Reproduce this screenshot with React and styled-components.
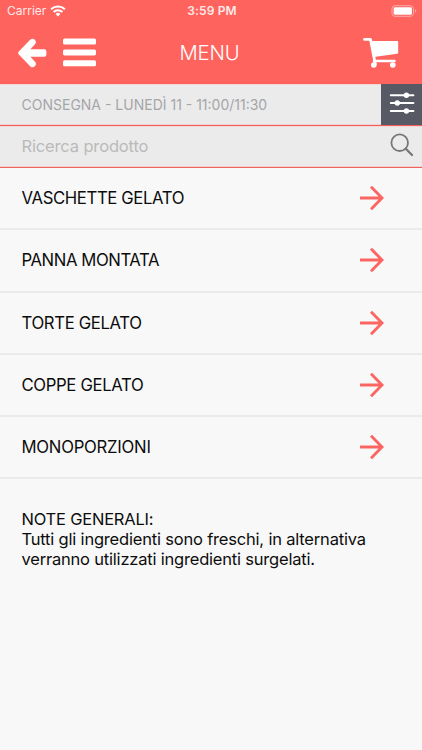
import React from "react";
import styled, { createGlobalStyle } from "styled-components";

const GlobalStyle = createGlobalStyle`
  * {
    box-sizing: border-box;
  }
  body {
    margin: 0;
    background: #f8f8f8;
    font-family: Inter, "Liberation Sans", sans-serif;
  }
  svg {
    display: block;
    flex-shrink: 0;
  }
`;

const Screen = styled.div`
  width: 422px;
  height: 750px;
  overflow: hidden;
  background: #f8f8f8;
  color: #0c0c0c;
`;

const Text = styled.span`
  white-space: nowrap;
  letter-spacing: ${({ $spacing }) => $spacing || 0}px;
`;

const Header = styled.header`
  height: 84px;
  background: #ff635e;
  color: #fff;
`;

const StatusBar = styled.div`
  display: grid;
  grid-template-columns: 1fr auto 1fr;
  align-items: center;
  height: 21px;
  padding: 0 5px 0 7px;
  font-size: 12px;
  color: #ffe9e8;
`;

const Carrier = styled.div`
  display: flex;
  align-items: center;
  gap: 4px;
`;

const Clock = styled(Text)`
  font-weight: 600;
`;

const Battery = styled.div`
  justify-self: end;
`;

const NavBar = styled.nav`
  display: grid;
  grid-template-columns: 1fr auto 1fr;
  align-items: center;
  height: 63px;
  padding: 0 22px 0 18px;
`;

const NavLeft = styled.div`
  display: flex;
  align-items: center;
  gap: 16px;
`;

const Title = styled.h1`
  margin: 0;
  padding-left: 1px;
  font-size: 20.3px;
  font-weight: 300;
`;

const Cart = styled.div`
  justify-self: end;
`;

const Bar = styled.div`
  display: flex;
  align-items: center;
  justify-content: space-between;
  height: 42px;
  padding-left: 21.5px;
  background: #ebebeb;
  border-bottom: 1px solid #f0605c;
  box-shadow: inset 0 -1px #f3cfce, inset 0 1px #f3d6d5;
  color: ${({ $color }) => $color};
  font-size: ${({ $size }) => $size}px;
`;

const FilterButton = styled.div`
  display: flex;
  align-items: center;
  justify-content: center;
  width: 41px;
  height: 100%;
  padding-bottom: 3px;
  background: #575964;
`;

const Placeholder = styled(Text)`
  padding-bottom: 2px;
`;

const SearchButton = styled.div`
  padding: 0 8px 3px 0;
`;

const List = styled.ul`
  margin: 0;
  padding: 0;
  list-style: none;
`;

const Item = styled.li`
  display: flex;
  align-items: center;
  justify-content: space-between;
  height: 62.25px;
  padding: 0 38px 0 21.5px;
  border-bottom: 2px solid #ebebeb;
  font-size: 16.7px;
`;

const Notes = styled.div`
  padding: 30px 21.5px;
  font-size: 16.5px;
  line-height: 20px;
`;

const NoteLine = styled(Text)`
  display: block;
`;

const WifiIcon = () => (
  <svg width="16" height="12" viewBox="0 0 16 12" fill="none" stroke="#fff" strokeWidth="2">
    <path d="M1.1 4.3a10 10 0 0 1 13.8 0M3.6 7a6.3 6.3 0 0 1 8.8 0" />
    <path d="M8 11.4 5.6 9a3.4 3.4 0 0 1 4.8 0Z" fill="#fff" stroke="none" />
  </svg>
);

const BatteryIcon = () => (
  <svg width="26" height="12" viewBox="0 0 26 12">
    <rect x="1" y="0.7" width="21.5" height="10.6" rx="3" fill="none" stroke="#ffaba8" />
    <rect x="2.7" y="2.3" width="18.2" height="7.4" rx="1.4" fill="#fff" />
    <path d="M24 4.3v3.4q1.3-.5 1.3-1.7T24 4.3Z" fill="#ffaba8" />
  </svg>
);

const BackIcon = () => (
  <svg width="29" height="30" viewBox="0 0 29 30" fill="#fff">
    <path d="M.8 13.5 12.4 1.5q2.2-1.8 4.4.2 2.2 2.3.2 4.6L12.4 11.3H26.2q2.2 0 2.2 2.2v3q0 2.2-2.2 2.2H12.4L17 23.7q2 2.3-.2 4.6-2.2 2-4.4.2L.8 16.5q-1.2-1.5 0-3Z" />
  </svg>
);

const MenuIcon = () => (
  <svg width="33" height="30" viewBox="0 0 33 30" fill="#fff">
    <rect y="0.6" width="33" height="6" rx="1.6" />
    <rect y="11.4" width="33" height="6" rx="1.6" />
    <rect y="22.3" width="33" height="6" rx="1.6" />
  </svg>
);

const CartIcon = () => (
  <svg width="37" height="32" viewBox="0 0 37 32" fill="none" stroke="#fff">
    <path d="M1.5 2.4h6L12.3 27" strokeWidth="2.8" strokeLinecap="round" strokeLinejoin="round" />
    <path d="M8.2 3.9H34.2q1 0 1 1V15.6q0 1-1 1.2L11 20Z" fill="#fff" stroke="none" />
    <path d="M11 24h20.5" strokeWidth="2.5" strokeLinecap="round" />
    <circle cx="10.8" cy="28" r="2.8" fill="#fff" stroke="none" />
    <circle cx="29.8" cy="28" r="2.8" fill="#fff" stroke="none" />
  </svg>
);

const SlidersIcon = () => (
  <svg width="26" height="22" viewBox="0 0 26 22" stroke="#fff" strokeWidth="2" strokeLinecap="round">
    <path d="M1.8 3.2h22.6M1.8 11h22.6M1.8 19h22.6" />
    <g fill="#fff" stroke="none">
      <circle cx="17.4" cy="3.2" r="2.7" />
      <circle cx="8.3" cy="11" r="2.7" />
      <circle cx="17.4" cy="19" r="2.7" />
    </g>
  </svg>
);

const SearchIcon = () => (
  <svg width="24" height="24" viewBox="0 0 24 24" fill="none" stroke="#777" strokeLinecap="round">
    <circle cx="9.7" cy="9.7" r="8.3" strokeWidth="1.8" />
    <path d="M15.8 15.8 22 22" strokeWidth="2.3" />
  </svg>
);

const ArrowIcon = () => (
  <svg width="24" height="26" viewBox="0 0 24 26" fill="none" stroke="#fb6662" strokeWidth="2.9">
    <path d="M0 13h22M11 1.8 22 13 11 24.2" />
  </svg>
);

const categories = [
  { name: "VASCHETTE GELATO", spacing: -0.37 },
  { name: "PANNA MONTATA", spacing: -0.42 },
  { name: "TORTE GELATO", spacing: -0.35 },
  { name: "COPPE GELATO", spacing: -0.35 },
  { name: "MONOPORZIONI", spacing: -0.25 },
];

const App = () => {
  return (
    <Screen>
      <GlobalStyle />
      <Header>
        <StatusBar>
          <Carrier>
            <Text>Carrier</Text>
            <WifiIcon />
          </Carrier>
          <Clock $spacing={0.15}>3:59 PM</Clock>
          <Battery>
            <BatteryIcon />
          </Battery>
        </StatusBar>
        <NavBar>
          <NavLeft>
            <BackIcon />
            <MenuIcon />
          </NavLeft>
          <Title>
            <Text $spacing={-0.2}>MENU</Text>
          </Title>
          <Cart>
            <CartIcon />
          </Cart>
        </NavBar>
      </Header>
      <Bar $size={14} $color="#a5a5aa">
        <Text>CONSEGNA - LUNEDÌ 11 - 11:00/11:30</Text>
        <FilterButton>
          <SlidersIcon />
        </FilterButton>
      </Bar>
      <Bar $size={16.5} $color="#bababa">
        <Placeholder $spacing={-0.15}>Ricerca prodotto</Placeholder>
        <SearchButton>
          <SearchIcon />
        </SearchButton>
      </Bar>
      <List>
        {categories.map(({ name, spacing }) => (
          <Item key={name}>
            <Text $spacing={spacing}>{name}</Text>
            <ArrowIcon />
          </Item>
        ))}
      </List>
      <Notes>
        <NoteLine $spacing={-0.22}>NOTE GENERALI:</NoteLine>
        <NoteLine $spacing={-0.19}>Tutti gli ingredienti sono freschi, in alternativa</NoteLine>
        <NoteLine $spacing={-0.2}>verranno utilizzati ingredienti surgelati.</NoteLine>
      </Notes>
    </Screen>
  );
};

export default App;
